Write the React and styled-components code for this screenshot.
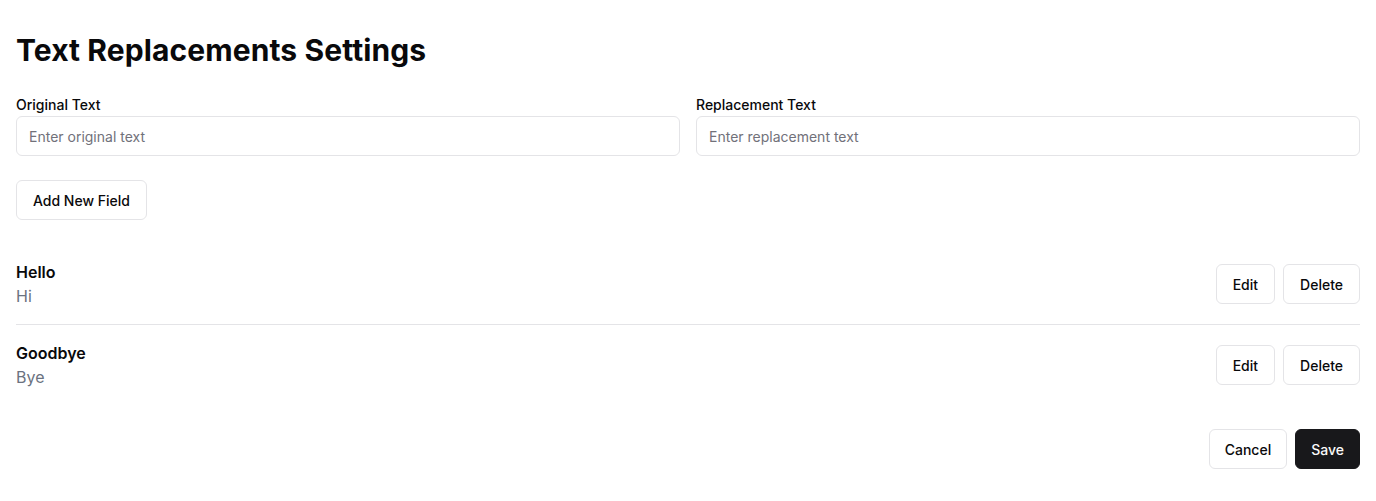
import React, { useState } from 'react';
import styled, { createGlobalStyle } from 'styled-components';

const GlobalStyle = createGlobalStyle`
  * { box-sizing: border-box; }
  body {
    margin: 0;
    background: #ffffff;
    font-family: Inter, "Noto Sans", sans-serif;
    color: #09090b;
  }
`;

const Page = styled.div`
  padding: 32px 16px 16px 16px;
  display: flex;
  flex-direction: column;
`;

const Title = styled.h1`
  margin: 0 0 27px 0;
  font-size: 30px;
  line-height: 36px;
  font-weight: 700;
  letter-spacing: 0.1px;
`;

const FieldGrid = styled.div`
  display: grid;
  grid-template-columns: 1fr 1fr;
  gap: 16px;
`;

const Field = styled.div`
  display: flex;
  flex-direction: column;
  gap: 1px;
`;

const Label = styled.label`
  font-size: 14px;
  line-height: 20px;
  font-weight: 500;
`;

const Input = styled.input`
  height: 40px;
  width: 100%;
  border: 1px solid #e4e4e7;
  border-radius: 6px;
  padding: 0 12px;
  font-family: inherit;
  font-size: 14px;
  color: #09090b;
  outline: none;
  &::placeholder { color: #71717a; }
`;

const Button = styled.button`
  height: 40px;
  padding: 0 ${p => (p.$compact ? 15 : 16)}px;
  border-radius: 6px;
  font-family: inherit;
  font-size: 14px;
  font-weight: 500;
  cursor: pointer;
  border: 1px solid ${p => (p.$primary ? '#18181b' : '#e4e4e7')};
  background: ${p => (p.$primary ? '#18181b' : '#ffffff')};
  color: ${p => (p.$primary ? '#fafafa' : '#09090b')};
`;

const AddRow = styled.div`
  margin-top: 24px;
  display: flex;
`;

const List = styled.div`
  margin-top: 24px;
  display: flex;
  flex-direction: column;
`;

const Item = styled.div`
  display: flex;
  align-items: center;
  justify-content: space-between;
  padding: 16px 0;
  border-bottom: ${p => (p.$last ? 'none' : '1px solid #e4e4e7')};
`;

const ItemText = styled.div`
  display: flex;
  flex-direction: column;
`;

const Original = styled.span`
  font-size: 16px;
  line-height: 24px;
  font-weight: 600;
`;

const Replacement = styled.span`
  font-size: 16px;
  line-height: 24px;
  color: #6b7280;
`;

const Actions = styled.div`
  display: flex;
  gap: 8px;
`;

const Footer = styled.div`
  margin-top: 24px;
  display: flex;
  justify-content: flex-end;
  gap: 8px;
`;

export default function App() {
  const [items] = useState([
    { original: 'Hello', replacement: 'Hi' },
    { original: 'Goodbye', replacement: 'Bye' },
  ]);

  return (
    <>
      <GlobalStyle />
      <Page>
        <Title>Text Replacements Settings</Title>
        <FieldGrid>
          <Field>
            <Label>Original Text</Label>
            <Input placeholder="Enter original text" />
          </Field>
          <Field>
            <Label>Replacement Text</Label>
            <Input placeholder="Enter replacement text" />
          </Field>
        </FieldGrid>
        <AddRow>
          <Button>Add New Field</Button>
        </AddRow>
        <List>
          {items.map((it, i) => (
            <Item key={it.original} $last={i === items.length - 1}>
              <ItemText>
                <Original>{it.original}</Original>
                <Replacement>{it.replacement}</Replacement>
              </ItemText>
              <Actions>
                <Button>Edit</Button>
                <Button>Delete</Button>
              </Actions>
            </Item>
          ))}
        </List>
        <Footer>
          <Button $compact>Cancel</Button>
          <Button $compact $primary>Save</Button>
        </Footer>
      </Page>
    </>
  );
}
